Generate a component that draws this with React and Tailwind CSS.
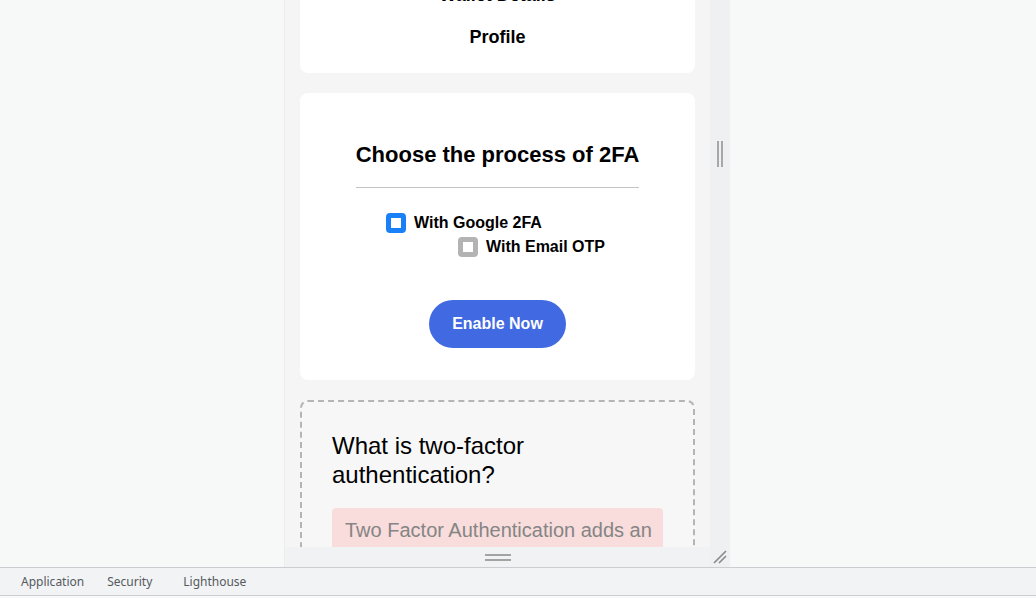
import React, { useState } from 'react';

const CheckRow = ({ label, checked, onClick, className }) => (
  <button onClick={onClick} className={`flex items-center gap-2 h-5 ${className}`}>
    <span
      className={`w-5 h-5 rounded-[4px] border-[5px] bg-white ${checked ? 'border-[#1a80f7]' : 'border-[#b3b3b3]'}`}
    />
    <span className="text-[16px] font-bold leading-5 text-black">{label}</span>
  </button>
);

export default function App() {
  const [method, setMethod] = useState('google');

  return (
    <div className="w-[1036px] h-[598px] bg-[#f7f8f8] overflow-hidden flex flex-col font-['Liberation_Sans',Arial,sans-serif]">
      {/* device area */}
      <div className="flex h-[567px]">
        <div className="w-[285px] border-r border-[#ececec]" />
        <div className="w-[445px] flex flex-col">
          <div className="flex h-[547px]">
            {/* viewport */}
            <div className="w-[425px] h-[547px] overflow-hidden bg-[#f5f5f5] px-[15px]">
              <div className="-mt-[40px] flex flex-col">
                <div className="bg-white rounded-lg pt-6 pb-[25px] flex flex-col items-center gap-5">
                  <div className="text-[18px] font-bold leading-[22px] text-black">Wallet Details</div>
                  <div className="text-[18px] font-bold leading-[22px] text-black">Profile</div>
                </div>

                <div className="mt-5 bg-white rounded-lg pt-[49px] pb-8 flex flex-col items-center">
                  <h2 className="text-[22px] font-bold leading-[25px] text-black pb-5 border-b border-[#c4c4c4]">
                    Choose the process of 2FA
                  </h2>
                  <div className="self-stretch mt-[25px] flex flex-col gap-1">
                    <CheckRow
                      label="With Google 2FA"
                      checked={method === 'google'}
                      onClick={() => setMethod('google')}
                      className="ml-[86px]"
                    />
                    <CheckRow
                      label="With Email OTP"
                      checked={method === 'email'}
                      onClick={() => setMethod('email')}
                      className="ml-[158px]"
                    />
                  </div>
                  <button className="mt-[43px] w-[137px] h-12 rounded-full bg-[#4169e1] text-white text-[16px] font-bold leading-[46px]">
                    Enable Now
                  </button>
                </div>

                <div className="mt-5 bg-[#f7f7f7] border-2 border-dashed border-[#b5b5b5] rounded-lg pt-[29px] px-[30px] pb-8">
                  <h3 className="text-[24px] leading-[29px] text-black">What is two-factor authentication?</h3>
                  <div className="mt-[19px] bg-[#f9dcdc] rounded pl-[13px] pr-1 pt-2 pb-2 text-[20px] leading-[28px] text-[#858585]">
                    Two Factor Authentication adds an extra layer of security to your account.
                  </div>
                </div>
              </div>
            </div>
            {/* right handle */}
            <div className="w-5 bg-[#eff0f1] flex items-start justify-center pt-[141px] gap-[2px]">
              <div className="w-[2px] h-[26px] bg-[#a8a8a8]" />
              <div className="w-[2px] h-[26px] bg-[#a8a8a8]" />
            </div>
          </div>
          {/* bottom handle */}
          <div className="h-5 bg-[#f1f2f3] flex">
            <div className="w-[425px] flex flex-col items-center justify-center gap-[3px]">
              <div className="w-[26px] h-[2px] bg-[#a3a3a3]" />
              <div className="w-[26px] h-[2px] bg-[#a3a3a3]" />
            </div>
            <div className="w-5 bg-[#eff0f1] flex items-center justify-center">
              <svg width="14" height="14" viewBox="0 0 14 14">
                <path d="M1 13 L13 1 M6 13 L13 6" stroke="#8a8a8a" strokeWidth="1.6" />
              </svg>
            </div>
          </div>
        </div>
        <div className="flex-1" />
      </div>

      {/* devtools tabs */}
      <div className="h-[29px] border-y border-[#cbcdd1] bg-[#f1f3f4] flex items-center text-[12px] text-[#555a60] font-['Noto_Sans',sans-serif]">
        <span className="ml-[21px]">Application</span>
        <span className="ml-[23px]">Security</span>
        <span className="ml-[31px]">Lighthouse</span>
      </div>
      <div className="flex-1 bg-[#f8f9fa]" />
    </div>
  );
}
